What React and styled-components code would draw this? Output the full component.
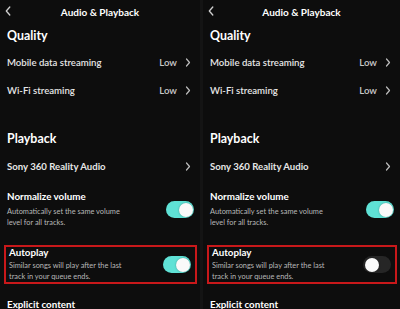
import React from "react";
import styled, { createGlobalStyle } from "styled-components";

const GlobalStyle = createGlobalStyle`
  html, body { margin: 0; padding: 0; background: #0c0c0c; }
  body { font-family: Lato, "Open Sans", sans-serif; }
`;

const Page = styled.div`
  width: 400px;
  height: 309px;
  overflow: hidden;
  display: grid;
  grid-template-columns: 200px 197px;
  column-gap: 3px;
  background: #141414;
`;

const Panel = styled.div`
  background: #0d0d0d;
  display: flex;
  flex-direction: column;
  color: #fff;
  overflow: hidden;

  & > * {
    flex-shrink: 0;
  }
`;

const Header = styled.div`
  height: 23px;
  display: flex;
  align-items: center;
  justify-content: center;
  position: relative;
  font-size: 10px;
  font-weight: 700;
`;

const Back = styled.svg`
  position: absolute;
  left: 5px;
  top: 6px;
`;

const Heading = styled.div`
  height: ${(p) => p.$h}px;
  display: flex;
  align-items: center;
  padding-left: 7px;
  font-size: 12.4px;
  font-weight: 700;
  margin-top: ${(p) => p.$top || 0}px;
`;

const Row = styled.div`
  height: 28px;
  display: flex;
  align-items: center;
  padding: 0 9px 0 7px;
  font-size: 9.6px;
  font-weight: ${(p) => (p.$bold ? 700 : 600)};
  color: #e6e6e6;
`;

const Label = styled.span`
  flex: 1;
`;

const Value = styled.span`
  color: #c8c8c8;
  margin-right: 8px;
`;

const ToggleRow = styled.div`
  display: flex;
  align-items: center;
  padding: ${(p) => p.$pad};
  margin: ${(p) => p.$margin};
  border: ${(p) => (p.$boxed ? "2px solid #c8181a" : "none")};
`;

const Texts = styled.div`
  flex: 1;
  display: flex;
  flex-direction: column;
`;

const RowTitle = styled.div`
  font-size: 9.8px;
  font-weight: 700;
  color: #fff;
  line-height: 11px;
`;

const Desc = styled.div`
  font-size: 7.4px;
  color: #b8b8b8;
  line-height: 11px;
  margin-top: ${(p) => p.$gap}px;
`;

const Track = styled.div`
  width: 28px;
  height: 17px;
  border-radius: 9px;
  background: ${(p) => (p.$on ? "#5fe2d6" : "#262626")};
  position: relative;
  flex-shrink: 0;
`;

const Knob = styled.div`
  position: absolute;
  top: 1.5px;
  left: ${(p) => (p.$on ? "12.5px" : "1.5px")};
  width: 14px;
  height: 14px;
  border-radius: 50%;
  background: #fafafa;
  box-shadow: 0 0 2px rgba(0, 0, 0, 0.35);
`;

const Chevron = () => (
  <svg width="6" height="9" viewBox="0 0 6 9">
    <path
      d="M1.5 1 L4.5 4.5 L1.5 8"
      stroke="#bdbdbd"
      strokeWidth="1.2"
      fill="none"
      strokeLinecap="round"
      strokeLinejoin="round"
    />
  </svg>
);

function Toggle({ on }) {
  return (
    <Track $on={on}>
      <Knob $on={on} />
    </Track>
  );
}

function Screen({ autoplay }) {
  return (
    <Panel>
      <Header>
        <Back width="6" height="10" viewBox="0 0 6 10">
          <path d="M4.8 1 L1.3 5 L4.8 9" stroke="#cfcfcf" strokeWidth="1.3" fill="none" strokeLinecap="round" strokeLinejoin="round" />
        </Back>
        Audio &amp; Playback
      </Header>
      <Heading $h={25}>Quality</Heading>
      <Row>
        <Label>Mobile data streaming</Label>
        <Value>Low</Value>
        <Chevron />
      </Row>
      <Row>
        <Label>Wi-Fi streaming</Label>
        <Value>Low</Value>
        <Chevron />
      </Row>
      <Heading $top={21} $h={27}>Playback</Heading>
      <Row $bold>
        <Label>Sony 360 Reality Audio</Label>
        <Chevron />
      </Row>
      <ToggleRow $pad="11px 6px 0 7px" $margin="0">
        <Texts>
          <RowTitle>Normalize volume</RowTitle>
          <Desc $gap={4}>
            Automatically set the same volume
            <br />
            level for all tracks.
          </Desc>
        </Texts>
        <Toggle on />
      </ToggleRow>
      <ToggleRow $boxed $pad="0 4px 0 3px" $margin="17px 3px 0 4px">
        <Texts>
          <RowTitle>Autoplay</RowTitle>
          <Desc $gap={2}>
            Similar songs will play after the last
            <br />
            track in your queue ends.
          </Desc>
        </Texts>
        <Toggle on={autoplay} />
      </ToggleRow>
      <Heading $top={15} $h={11}>
        <RowTitle>Explicit content</RowTitle>
      </Heading>
    </Panel>
  );
}

export default function App() {
  return (
    <>
      <GlobalStyle />
      <Page>
        <Screen autoplay />
        <Screen autoplay={false} />
      </Page>
    </>
  );
}
